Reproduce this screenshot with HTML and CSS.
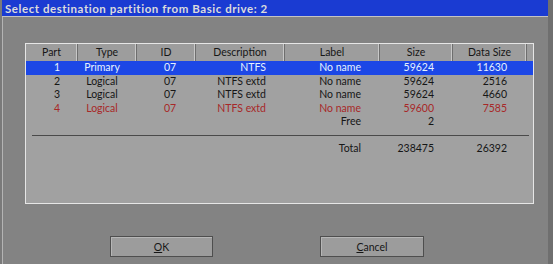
FILE: index.html
```html
<!DOCTYPE html>
<html>
<head>
<meta charset="utf-8">
<link rel="stylesheet" href="styles.css">
</head>
<body>
<div class="window">
  <div class="titlebar">Select destination partition from Basic drive: 2</div>
  <div class="body">
    <div class="panel">
      <div class="row header">
        <div class="h">Part</div>
        <div class="h">Type</div>
        <div class="h">ID</div>
        <div class="h">Description</div>
        <div class="h">Label</div>
        <div class="h">Size</div>
        <div class="h">Data Size</div>
      </div>
      <div class="row selected">
        <div class="c part">1</div>
        <div class="c type">Primary</div>
        <div class="c id">07</div>
        <div class="c r">NTFS</div>
        <div class="c r">No name</div>
        <div class="c r">59624</div>
        <div class="c r last">11630</div>
      </div>
      <div class="row">
        <div class="c part">2</div>
        <div class="c type">Logical</div>
        <div class="c id">07</div>
        <div class="c r">NTFS extd</div>
        <div class="c r">No name</div>
        <div class="c r">59624</div>
        <div class="c r last">2516</div>
      </div>
      <div class="row">
        <div class="c part">3</div>
        <div class="c type">Logical</div>
        <div class="c id">07</div>
        <div class="c r">NTFS extd</div>
        <div class="c r">No name</div>
        <div class="c r">59624</div>
        <div class="c r last">4660</div>
      </div>
      <div class="row red">
        <div class="c part">4</div>
        <div class="c type">Logical</div>
        <div class="c id">07</div>
        <div class="c r">NTFS extd</div>
        <div class="c r">No name</div>
        <div class="c r">59600</div>
        <div class="c r last">7585</div>
      </div>
      <div class="row">
        <div class="c part"></div>
        <div class="c type"></div>
        <div class="c id"></div>
        <div class="c r"></div>
        <div class="c r">Free</div>
        <div class="c r">2</div>
        <div class="c r last"></div>
      </div>
      <div class="sep"></div>
      <div class="row">
        <div class="c part"></div>
        <div class="c type"></div>
        <div class="c id"></div>
        <div class="c r"></div>
        <div class="c r">Total</div>
        <div class="c r">238475</div>
        <div class="c r last">26392</div>
      </div>
    </div>
    <div class="buttons">
      <button class="btn ok"><u>O</u>K</button>
      <button class="btn cancel"><u>C</u>ancel</button>
    </div>
  </div>
</div>
</body>
</html>
```

FILE: styles.css
```css
html, body {
  margin: 0;
  padding: 0;
  background: #6f6f6f;
  width: 553px;
  height: 264px;
  overflow: hidden;
}

.window {
  width: 546px;
  height: 264px;
  overflow: hidden;
  background: #838383;
  border-left: 2px solid #7a7a7a;
  font-family: Lato, "Liberation Sans", sans-serif;
  font-size: 10.5px;
  color: #161616;
}

.titlebar {
  height: 16px;
  line-height: 17px;
  background: #1a3bd2;
  color: #dcdcdc;
  font-weight: bold;
  font-size: 11.5px;
  padding-left: 5px;
  border-bottom: 1px solid #c4c4c4;
  letter-spacing: 0.55px;
  white-space: nowrap;
  overflow: hidden;
  margin-left: -2px;
}

.body {
  border-left: 1px solid #b4b4b4;
  padding-top: 26px;
  height: 221px;
}

.panel {
  margin-left: 22px;
  width: 507px;
  height: 159px;
  background: #a1a1a1;
  border: 1px solid #e6e6e6;
}

.row {
  display: grid;
  grid-template-columns: 52px 59px 59px 89px 95px 73px 74px;
  height: 13.5px;
  line-height: 13.5px;
  white-space: nowrap;
}

.header {
  height: 17px;
  line-height: 17px;
  background: #9d9d9d;
}

.h {
  text-align: center;
  border-right: 1px solid #6e6e6e;
  box-shadow: inset -2px 0 0 -1px #c8c8c8;
}

.selected {
  background: #1c47e6;
  color: #e6f2ff;
}

.red {
  color: #a82828;
}

.c.part {
  text-align: center;
  padding-left: 10px;
}

.c.type {
  text-align: center;
  padding-right: 11px;
}

.c.id {
  text-align: center;
  padding-left: 7px;
}

.c.r {
  text-align: right;
  padding-right: 19px;
}

.c.r.last {
  padding-right: 20px;
}

.sep {
  margin: 6px 4px 6.5px 6px;
  border-top: 1px solid #4a4a4a;
}

.buttons {
  display: flex;
  gap: 107px;
  padding-left: 107px;
  margin-top: 32px;
}

.btn {
  height: 21px;
  padding: 0;
  margin: 0;
  background: #9c9c9c;
  border: 1px solid #4e4e4e;
  box-shadow: inset 1px 1px 0 #b6b6b6;
  font-family: Lato, "Liberation Sans", sans-serif;
  font-size: 10.5px;
  color: #161616;
}

.btn.ok {
  width: 103px;
}

.btn.cancel {
  width: 104px;
}
```
